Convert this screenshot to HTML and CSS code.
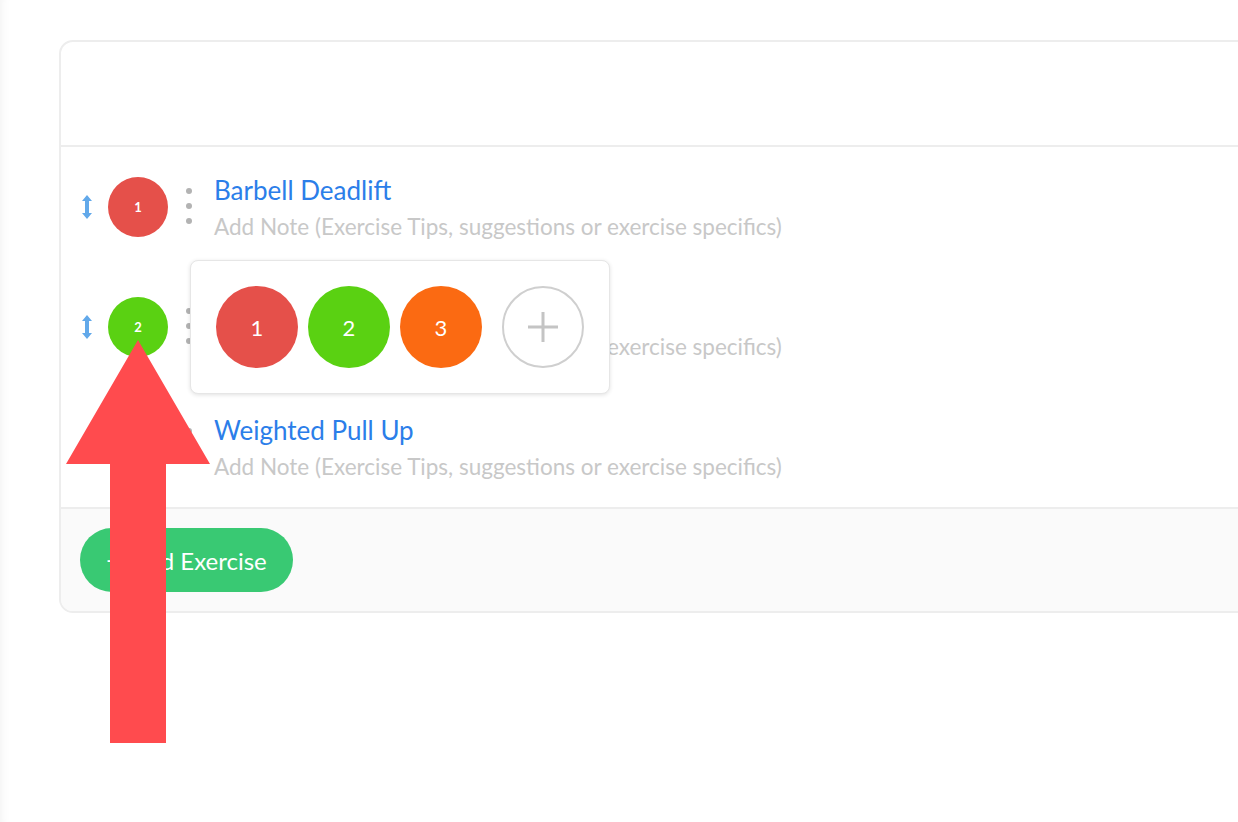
FILE: index.html
```html
<!DOCTYPE html>
<html>
<head>
    <title>Workout Builder</title>
    <meta charset="UTF-8">
    <link rel="stylesheet" href="styles.css">
</head>
<body>
    <div class="page">
        <div class="card">
            <div class="card-header"></div>

            <div class="exercises">
                <div class="exercise">
                    <span class="drag">
                        <svg width="14" height="28" viewBox="0 0 14 28"><path d="M7 2 L12 8 H9 V20 H12 L7 26 L2 20 H5 V8 H2 Z" fill="#62a9ea"/></svg>
                    </span>
                    <span class="badge badge-red">1</span>
                    <span class="more"><i></i><i></i><i></i></span>
                    <div class="exercise-info">
                        <a class="exercise-name" href="#">Barbell Deadlift</a>
                        <div class="exercise-note">Add Note (Exercise Tips, suggestions or exercise specifics)</div>
                    </div>
                </div>
                <div class="exercise">
                    <span class="drag">
                        <svg width="14" height="28" viewBox="0 0 14 28"><path d="M7 2 L12 8 H9 V20 H12 L7 26 L2 20 H5 V8 H2 Z" fill="#62a9ea"/></svg>
                    </span>
                    <span class="badge badge-green">2</span>
                    <span class="more"><i></i><i></i><i></i></span>
                    <div class="exercise-info">
                        <a class="exercise-name" href="#">Barbell Bench Press</a>
                        <div class="exercise-note">Add Note (Exercise Tips, suggestions or exercise specifics)</div>
                    </div>
                </div>
                <div class="exercise">
                    <span class="drag">
                        <svg width="14" height="28" viewBox="0 0 14 28"><path d="M7 2 L12 8 H9 V20 H12 L7 26 L2 20 H5 V8 H2 Z" fill="#62a9ea"/></svg>
                    </span>
                    <span class="badge badge-orange">3</span>
                    <span class="more"><i></i><i></i><i></i></span>
                    <div class="exercise-info">
                        <a class="exercise-name" href="#">Weighted Pull Up</a>
                        <div class="exercise-note">Add Note (Exercise Tips, suggestions or exercise specifics)</div>
                    </div>
                </div>

                <!-- group picker -->
                <div class="picker">
                    <span class="pick pick-red">1</span>
                    <span class="pick pick-green">2</span>
                    <span class="pick pick-orange">3</span>
                    <span class="pick pick-add">
                        <svg width="36" height="36" viewBox="0 0 36 36"><path d="M18 3 V33 M3 18 H33" stroke="#c4c4c4" stroke-width="3"/></svg>
                    </span>
                </div>
            </div>

            <div class="card-footer">
                <button class="add-btn"><span class="plus">+</span>Add Exercise</button>
            </div>
        </div>

        <svg class="pointer" width="1238" height="822" viewBox="0 0 1238 822">
            <polygon points="138,340 210,464 166,464 166,743 110,743 110,464 66,464" fill="#ff4b4e"/>
        </svg>
    </div>
</body>
</html>
```

FILE: styles.css
```css
html, body {
    margin: 0;
    height: 100%;
    overflow: hidden;
    background-color: white;
}
.page {
    position: relative;
    height: 100%;
    padding: 40px 0 0 59px;
    box-sizing: border-box;
    font-family: 'Lato', 'Open Sans', sans-serif;
    box-shadow: inset 10px 0 10px -8px rgba(0,0,0,0.05);
}
.card {
    width: 1300px;
    border: 2px solid #ededed;
    border-radius: 14px;
    background-color: white;
    overflow: hidden;
}
.card-header {
    height: 103px;
    border-bottom: 2px solid #ededed;
}
.exercises {
    position: relative;
}
.exercise {
    height: 120px;
    display: flex;
    align-items: center;
    padding-left: 19px;
}
.drag {
    display: flex;
    width: 14px;
    margin-right: 14px;
}
.badge {
    width: 60px;
    height: 60px;
    border-radius: 50%;
    color: white;
    font-size: 13px;
    font-weight: bold;
    display: flex;
    align-items: center;
    justify-content: center;
}
.badge-red { background-color: #e5504a; }
.badge-green { background-color: #5ad112; }
.badge-orange { background-color: #fb6a12; }
.more {
    display: flex;
    flex-direction: column;
    gap: 9px;
    margin: 0 22px 2px 18px;
}
.more i {
    width: 6px;
    height: 6px;
    border-radius: 50%;
    background-color: #b3b3b3;
}
.exercise-info {
    display: flex;
    flex-direction: column;
    gap: 9px;
}
.exercise-name {
    font-size: 26px;
    color: #2b7ee9;
    text-decoration: none;
    line-height: 30px;
}
.exercise-note {
    font-size: 22.5px;
    color: #c8c8c8;
    line-height: 26px;
}
.picker {
    position: absolute;
    left: 129px;
    top: 113px;
    width: 420px;
    height: 134px;
    box-sizing: border-box;
    background-color: white;
    border: 1px solid #e6e6e6;
    border-radius: 8px;
    box-shadow: 0 1px 4px rgba(0,0,0,0.12);
    display: flex;
    align-items: center;
    gap: 10px;
    padding-left: 25px;
}
.pick {
    width: 82px;
    height: 82px;
    border-radius: 50%;
    box-sizing: border-box;
    color: white;
    font-size: 22px;
    display: flex;
    align-items: center;
    justify-content: center;
}
.pick-red { background-color: #e5504a; }
.pick-green { background-color: #5ad112; }
.pick-orange { background-color: #fb6a12; }
.pick-add {
    margin-left: 10px;
    border: 2px solid #cfcfcf;
    background-color: white;
}
.card-footer {
    height: 102px;
    border-top: 2px solid #ededed;
    background-color: #fafafa;
    display: flex;
    align-items: center;
    padding-left: 19px;
}
.add-btn {
    height: 64px;
    width: 213px;
    border: none;
    border-radius: 32px;
    background-color: #39c973;
    color: white;
    font-family: 'Lato', 'Open Sans', sans-serif;
    font-size: 24px;
    display: flex;
    align-items: center;
    justify-content: center;
    gap: 10px;
}
.plus {
    font-size: 26px;
}
.pointer {
    position: absolute;
    left: 0;
    top: 0;
}
```
